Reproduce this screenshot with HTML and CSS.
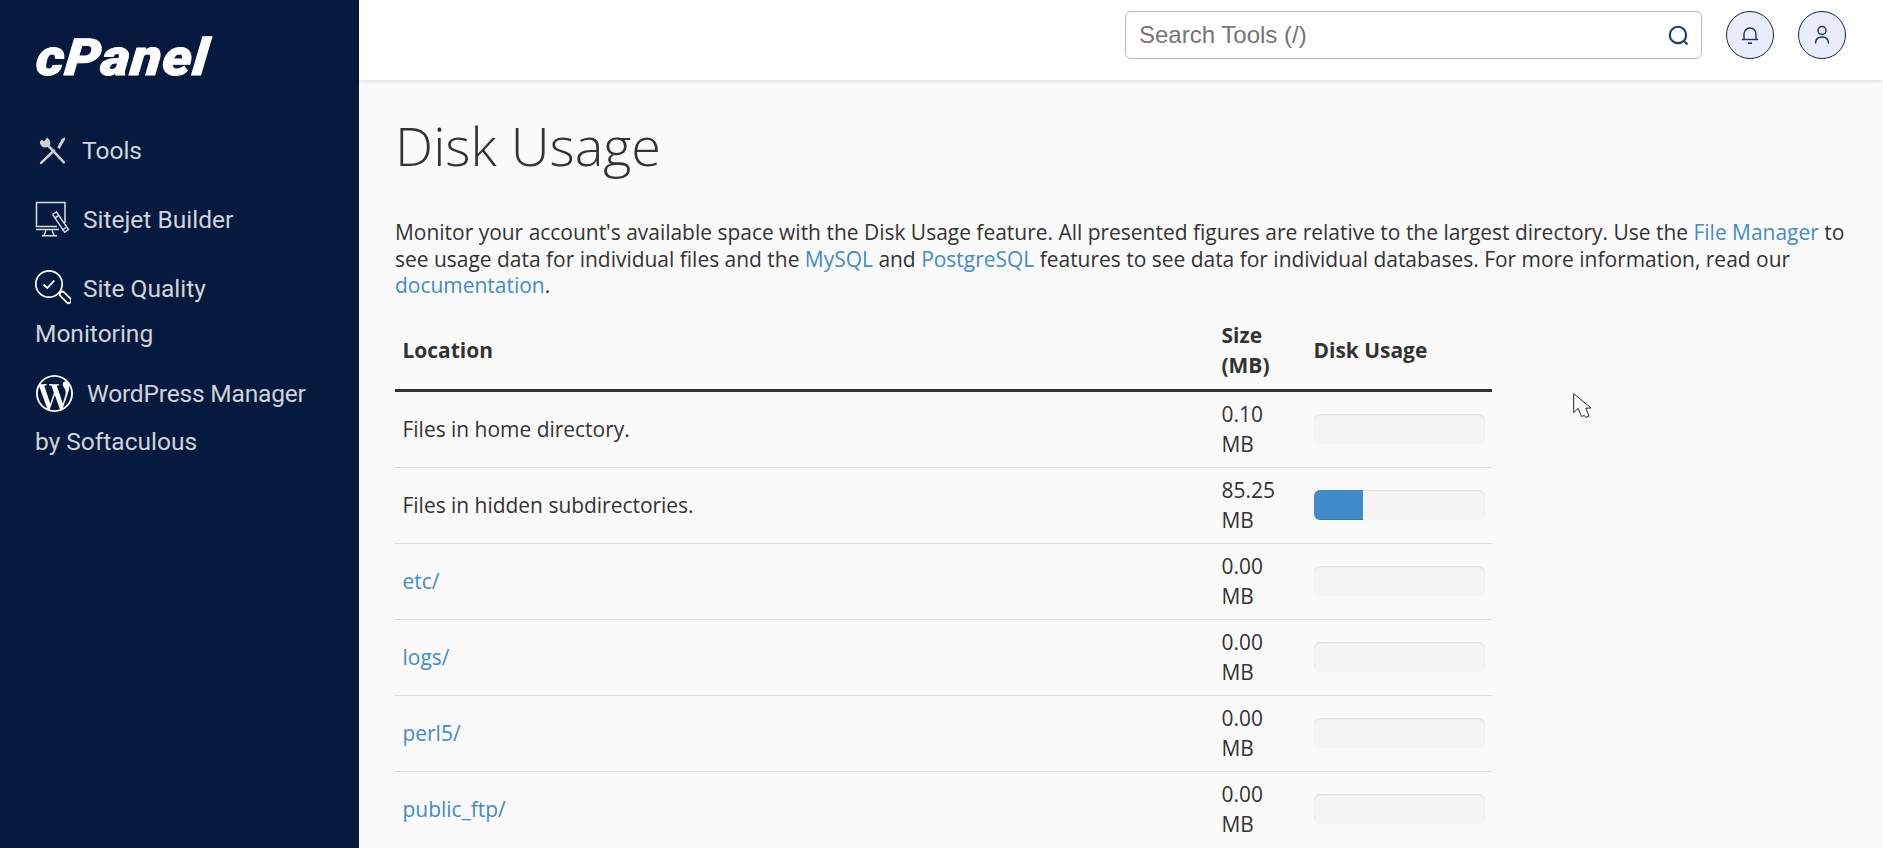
FILE: index.html
```html
<!DOCTYPE html>
<html lang="en">
<head>
<meta charset="utf-8">
<title>Disk Usage - cPanel</title>
<link rel="stylesheet" href="styles.css">
</head>
<body>
<div class="app">
  <aside class="sidebar">
    <div class="logo">cPanel</div>
    <nav class="nav">
      <a class="nav-item" href="#"><svg class="icon icon-tools" viewBox="0 0 28 28" fill="none" stroke="#d0d0d0" stroke-width="2.4"><path d="M10.500 10 25 25.500" stroke-linecap="round"/><path d="M8.800 1.500 6 5 3.500 3.500 1.800 5.500c0 3 2.200 5.500 5 5.500 2.500 0 4-1 5-2.500 .8-2.500-.8-5.500-3-7z" fill="#d0d0d0" stroke="none"/><path d="M3 26 15.500 14" stroke-linecap="round"/><path d="M18.500 11 22.500 3.500c1-1.200 3-2.300 3.500-2 .6 1 -.3 3.200-1.500 4.500l-3.500 6.500z" stroke="none" fill="#d0d0d0"/></svg><span class="label label-tools">Tools</span></a>
      <a class="nav-item" href="#"><svg class="icon icon-site" viewBox="0 0 36 36" fill="none" stroke="#d8dce2" stroke-width="1.500"><path d="M30 22V1.500H1.500V25.500H22"/><path d="M1 28.500H24"/><path d="M11 29 9 34.500M17 29l2 5.500M7 34.800H22"/><path d="m18 13 3.500-2 12 17.500-3.800 2.800L18 14z" stroke-width="1.400"/><path d="m20 17 3.500-2.300"/><path d="m31 26.500-3.800 2.600"/></svg><span class="label">Sitejet Builder</span></a>
      <a class="nav-item wrap" href="#"><svg class="icon icon-quality" viewBox="0 0 36 36" fill="none" stroke="#fff" stroke-width="1.700"><circle cx="14" cy="14" r="13.200"/><path d="m8.500 14.500 3.800 3.500 7-7.500" stroke-width="1.800"/><path d="m23.500 23.500 2-2"/><rect x="-2.500" y="0" width="5.200" height="14" rx="2.600" transform="translate(25.500 22.500) rotate(-45)"/></svg><span class="label">Site Quality Monitoring</span></a>
      <a class="nav-item wp" href="#"><svg class="icon icon-wp" viewBox="0 0 24 24" fill="#fff"><path d="M21.469 6.825c.84 1.537 1.318 3.3 1.318 5.175 0 3.979-2.156 7.456-5.363 9.325l3.295-9.527c.615-1.54.82-2.771.82-3.864 0-.405-.026-.78-.07-1.11m-7.981.105c.647-.03 1.232-.105 1.232-.105.582-.075.514-.93-.067-.899 0 0-1.755.135-2.88.135-1.064 0-2.85-.15-2.85-.15-.585-.03-.661.855-.075.885 0 0 .54.061 1.125.09l1.68 4.605-2.37 7.08L5.354 6.9c.649-.03 1.234-.1 1.234-.1.585-.075.516-.93-.065-.896 0 0-1.746.138-2.874.138-.2 0-.438-.008-.69-.015C4.911 3.15 8.235 1.215 12 1.215c2.809 0 5.365 1.072 7.286 2.833-.046-.003-.091-.009-.141-.009-1.06 0-1.812.923-1.812 1.914 0 .89.513 1.643 1.06 2.531.411.72.89 1.643.89 2.977 0 .915-.354 1.994-.821 3.479l-1.075 3.585-3.9-11.61.001.014zM12 22.784c-1.059 0-2.081-.153-3.048-.437l3.237-9.406 3.315 9.087c.024.053.05.101.078.149-1.12.393-2.325.609-3.582.609M1.211 12c0-1.564.336-3.05.935-4.39L7.29 21.709C3.694 19.96 1.212 16.271 1.211 12M12 0C5.385 0 0 5.385 0 12s5.385 12 12 12 12-5.385 12-12S18.615 0 12 0"/></svg><span class="label-wp">WordPress Manager</span> <span>by Softaculous</span></a>
    </nav>
  </aside>
  <div class="page">
    <header class="topbar">
      <div class="search">
        <input class="search-input" type="text" placeholder="Search Tools (/)">
        <svg class="search-icon" viewBox="0 0 20 20" fill="none" stroke="#1d3a70" stroke-width="2"><circle cx="9.500" cy="9.500" r="7.800"/><path d="m15 15 3.500 3.500"/></svg>
      </div>
      <button class="round" type="button" aria-label="Notifications"><svg viewBox="0 0 20 20" fill="none" stroke="#1d3461" stroke-width="1.400"><path d="M1.800 14.500h16.400"/><path d="M4 14.500V9a6 6 0 0 1 12 0v5.500"/><path d="M8 18.200h4" stroke-width="1.600"/></svg></button>
      <button class="round" type="button" aria-label="Account"><svg viewBox="0 0 20 20" fill="none" stroke="#1d3461" stroke-width="1.500"><circle cx="10" cy="5.500" r="4"/><path d="M3.500 18.500c0-4 2.500-6.500 6.500-6.500s6.500 2.500 6.500 6.500"/></svg></button>
    </header>
    <main class="content">
      <h1 class="title">Disk Usage</h1>
      <p class="intro">Monitor your account's available space with the Disk Usage feature. All presented figures are relative to the largest directory. Use the <a href="#">File Manager</a> to see usage data for individual files and the <a href="#">MySQL</a> and <a href="#">PostgreSQL</a> features to see data for individual databases. For more information, read our <a href="#">documentation</a>.</p>
      <table class="usage">
        <colgroup><col class="col-loc"><col class="col-size"><col class="col-bar"></colgroup>
        <thead>
          <tr><th>Location</th><th>Size (MB)</th><th>Disk Usage</th></tr>
        </thead>
        <tbody>
          <tr><td>Files in home directory.</td><td>0.10 MB</td><td><div class="bar"></div></td></tr>
          <tr><td>Files in hidden subdirectories.</td><td>85.25 MB</td><td><div class="bar"><div class="fill" style="width:29%"></div></div></td></tr>
          <tr><td><a href="#">etc/</a></td><td>0.00 MB</td><td><div class="bar"></div></td></tr>
          <tr><td><a href="#">logs/</a></td><td>0.00 MB</td><td><div class="bar"></div></td></tr>
          <tr><td><a href="#">perl5/</a></td><td>0.00 MB</td><td><div class="bar"></div></td></tr>
          <tr><td><a href="#">public_ftp/</a></td><td>0.00 MB</td><td><div class="bar"></div></td></tr>
        </tbody>
      </table>
    </main>
  </div>
</div>
<svg class="cursor" viewBox="0 0 18 26"><path d="M.7.700V19.500l4.500-4.200 3.300 8.200 2.800-1.100 1.700 2 3-1.500-3.200-7.700 5.300-.2z" fill="#fff" stroke="#222" stroke-width="1"/></svg>
</body>
</html>
```
FILE: styles.css
```css
* { box-sizing: border-box; }
html, body { margin: 0; height: 100%; overflow: hidden; }
body { font-family: "Open Sans", sans-serif; color: #333; background: #fafafa; }
a { color: #428bca; text-decoration: none; }

.app { display: flex; height: 100vh; }

.sidebar { flex: 0 0 359px; background: #06193e; padding: 35px 48px 0 35px; }
.logo {
  font-family: Roboto, sans-serif; font-weight: 900; font-style: italic;
  font-size: 51px; line-height: 46px; color: #fff; letter-spacing: 1px;
  -webkit-text-stroke: 1px #fff;
  height: 46px; margin: 0 0 45.500px -1.500px; white-space: nowrap;
  transform: skewX(-6deg) scaleX(1.09); transform-origin: left bottom;
}
.nav { display: flex; flex-direction: column; }
.nav-item {
  display: block; font-family: Roboto, sans-serif; font-size: 24.5px; line-height: 47px;
  color: #cfd4da; margin-bottom: 22px;
}
.nav-item.wrap { line-height: 45px; padding-top: 1px; margin-bottom: 14px; }
.nav-item.wp { line-height: 48px; }
.label-wp { letter-spacing: -.18px; }
.icon { display: inline-block; vertical-align: middle; }
.icon-tools { width: 29px; height: 29px; margin: -4px 15px 0 3px; }
.icon-site { width: 36px; height: 36px; margin: -4px 12px 0 0; }
.icon-quality { width: 36px; height: 36px; margin: -4px 12px 0 0; }
.icon-wp { width: 37px; height: 37px; margin: -4px 14px 0 1px; }

.page { flex: 1; min-width: 0; display: flex; flex-direction: column; }
.topbar {
  flex: 0 0 80px; background: #fff; box-shadow: 0 1px 5px rgba(0,0,0,.12);
  display: flex; align-items: center; justify-content: flex-end; gap: 24px;
  padding: 0 37px 10px 0; position: relative;
}
.search { position: relative; width: 577px; height: 48px; }
.search-input {
  width: 100%; height: 100%; border: 1px solid #aebcd4; border-radius: 6px;
  font-family: "Liberation Sans", sans-serif; font-size: 24px; padding: 0 50px 0 13px; outline: none; background: #fff;
}
.search-input::placeholder { color: #757575; opacity: 1; }
.search-icon { position: absolute; right: 13px; top: 14px; width: 21px; height: 21px; }
.round {
  width: 48px; height: 48px; border-radius: 50%; border: 1px solid #14264f; background: #e9ecfb;
  padding: 0; display: flex; align-items: center; justify-content: center;
}
.round svg { width: 20px; height: 20px; }

.content { flex: 1; padding: 0 36px; overflow: hidden; }
.title { font-weight: 300; font-size: 54px; line-height: 75px; margin: 28px 0 0; color: #333; }
.intro { font-size: 20.96px; line-height: 26.700px; margin: 36px 0 13px; }

.usage { width: 1097px; table-layout: fixed; border-collapse: collapse; font-size: 20.94px; line-height: 30px; }
.col-loc { width: 819px; }
.col-size { width: 92px; }
.col-bar { width: 186px; }
.usage th { text-align: left; font-weight: 700; padding: 7.500px 7.500px 9.500px; border-bottom: 3px solid #333; vertical-align: middle; }
.usage td { padding: 6.500px 7.500px 8.500px; border-bottom: 1px solid #ddd; vertical-align: middle; }
.usage tbody tr:last-child td { border-bottom: 0; }
.bar { height: 30px; width: 171px; background: #f5f5f5; border-radius: 6px; overflow: hidden; box-shadow: inset 0 1px 2px rgba(0,0,0,.1); }
.fill { height: 100%; background: #428bca; box-shadow: inset 0 -1px 0 rgba(0,0,0,.15); }

.cursor { position: absolute; left: 1573px; top: 393px; width: 18px; height: 26px; }
```
